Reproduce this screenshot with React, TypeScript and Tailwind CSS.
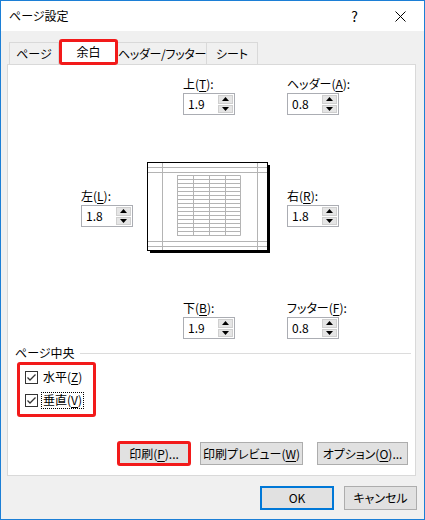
import React from 'react';

const font = "font-['Noto_Sans_CJK_JP','Noto_Sans',sans-serif] [font-feature-settings:'palt']";

const Arrow = ({ up }: { up?: boolean }) => (
  <svg width="7" height="4" viewBox="0 0 7 4">
    <path d={up ? 'M0 4 L3.5 0 L7 4 Z' : 'M0 0 L3.5 4 L7 0 Z'} fill="#000" />
  </svg>
);

const Spin = ({ value, className = '' }: { value: string; className?: string }) => (
  <div className={`flex h-[22px] w-[52px] items-center border border-[#abadb3] bg-white pl-[4px] pr-px ${className}`}>
    <span className="flex-1 text-[12px] leading-none">{value}</span>
    <div className="flex h-[18px] w-[15px] flex-col gap-px">
      <div className="flex flex-1 items-center justify-center border border-[#cfcfcf] bg-[#e5e5e5]">
        <Arrow up />
      </div>
      <div className="flex flex-1 items-center justify-center border border-[#cfcfcf] bg-[#e5e5e5]">
        <Arrow />
      </div>
    </div>
  </div>
);

const Label = ({ pre, k, className = '' }: { pre: string; k: string; className?: string }) => (
  <div className={`mb-px h-[17px] whitespace-nowrap leading-[17px] ${className}`}>
    {pre}(<span className="underline underline-offset-2">{k}</span>):
  </div>
);

const Field = ({ pre, k, value, className = '' }: { pre: string; k: string; value: string; className?: string }) => (
  <div className={`flex flex-col ${className}`}>
    <Label pre={pre} k={k} />
    <Spin value={value} />
  </div>
);

const Preview = () => {
  const rows = Array.from({ length: 16 }, (_, i) => 15 + i * 4);
  const cols = [30, 46, 62, 78, 93];
  return (
    <svg width="125" height="92" viewBox="0 0 125 92">
      <rect x="3" y="4" width="120" height="88" fill="#000" />
      <rect x="0.5" y="1.5" width="120" height="88" fill="#fff" stroke="#000" />
      <g stroke="#b4b4b4" strokeWidth="1">
        <line x1="15.5" y1="2" x2="15.5" y2="89" />
        <line x1="110.5" y1="2" x2="110.5" y2="89" />
        <line x1="1" y1="6.5" x2="120" y2="6.5" />
        <line x1="1" y1="11.5" x2="120" y2="11.5" />
        <line x1="1" y1="80.5" x2="120" y2="80.5" />
        <line x1="1" y1="85.5" x2="120" y2="85.5" />
        {rows.map((y) => (
          <line key={y} x1="30" y1={y - 0.5} x2="93.5" y2={y - 0.5} />
        ))}
        {cols.map((x) => (
          <line key={x} x1={x + 0.5} y1="14.5" x2={x + 0.5} y2="74.5" />
        ))}
      </g>
    </svg>
  );
};

const Check = () => (
  <span className="flex h-[13px] w-[13px] items-center justify-center border border-[#333] bg-white">
    <svg width="11" height="11" viewBox="0 0 11 11">
      <path d="M1.5 5.5 L4 8 L9.5 2.5" fill="none" stroke="#333" strokeWidth="1.3" />
    </svg>
  </span>
);

const Btn = ({ children, className = '' }: { children: React.ReactNode; className?: string }) => (
  <div className={`relative flex h-[23px] items-center justify-center whitespace-nowrap border border-[#adadad] bg-[#e1e1e1] text-[12px] ${className}`}>
    {children}
  </div>
);

export default function App() {
  return (
    <div className={`flex h-[520px] w-[425px] flex-col border border-[#1c7fd6] bg-[#f0f0f0] text-[12px] text-black ${font}`}>
      {/* title bar */}
      <div className="flex h-[30px] items-center bg-white pl-[8px]">
        <span className="flex-1 leading-none">ページ設定</span>
        <span className="mr-[37px] text-[14px] leading-none">?</span>
        <svg width="11" height="11" viewBox="0 0 11 11" className="mr-[18px]">
          <path d="M0.5 0.5 L10.5 10.5 M10.5 0.5 L0.5 10.5" stroke="#000" strokeWidth="1" />
        </svg>
      </div>

      {/* tabs */}
      <div className="flex h-[33px] items-end whitespace-nowrap pl-[8px] pt-[9px]">
        <div className="flex h-[22px] w-[50px] items-center justify-center border border-b-0 border-[#d9d9d9]">ページ</div>
        <div className="relative z-10 -mb-px flex h-[25px] w-[59px] items-center justify-center border border-b-0 border-[#d9d9d9] bg-white pb-[2px]">
          余白
          <div className="absolute -left-[1px] -right-[1px] -top-[2px] bottom-0 rounded-[3px] border-[3px] border-[#f21a1a]" />
        </div>
        <div className="flex h-[22px] w-[89px] items-center justify-center border border-b-0 border-l-0 border-[#d9d9d9] tracking-[-0.3px]">ヘッダー/フッター</div>
        <div className="flex h-[22px] w-[51px] items-center justify-center border border-b-0 border-l-0 border-[#d9d9d9]">シート</div>
      </div>

      {/* panel */}
      <div className="ml-[6px] mr-[8px] flex flex-1 flex-col border border-[#d9d9d9] bg-white">
        <div className="grid grid-cols-[51px_125px_52px] gap-x-[15px] pl-[73px] pt-[10px]">
          <div />
          <Field pre="上" k="T" value="1.9" className="ml-[36px]" />
          <Field pre="ヘッダー" k="A" value="0.8" />

          <Field pre="左" k="L" value="1.8" className="mt-[72px]" />
          <div className="mt-[46px]">
            <Preview />
          </div>
          <Field pre="右" k="R" value="1.8" className="mt-[72px]" />

          <div />
          <Field pre="下" k="B" value="1.9" className="ml-[36px] mt-[46px]" />
          <Field pre="フッター" k="F" value="0.8" className="mt-[46px]" />
        </div>

        <div className="ml-[7px] mr-[4px] mt-[6px] flex h-[16px] items-center gap-[5px]">
          <span className="leading-none">ページ中央</span>
          <div className="h-px flex-1 bg-[#dcdcdc]" />
        </div>

        <div className="ml-[9px] mt-px flex w-[79px] flex-col gap-[5px] rounded-[3px] border-[3px] border-[#f21a1a] pb-[5px] pl-[5px] pt-[3px]">
          <div className="flex h-[18px] items-center gap-[4px]">
            <Check />
            <span className="whitespace-nowrap px-px leading-none">
              水平(<span className="underline underline-offset-2">Z</span>)
            </span>
          </div>
          <div className="flex h-[18px] items-center gap-[3px]">
            <Check />
            <span className="flex h-[17px] items-center whitespace-nowrap border border-dotted border-black px-px leading-none">
              垂直(<span className="underline underline-offset-2">V</span>)
            </span>
          </div>
        </div>

        <div className="mt-auto mb-[10px] flex justify-end pr-[7px]">
          <Btn className="w-[72px]">
            印刷(<span className="underline underline-offset-2">P</span>)...
            <div className="absolute -inset-[2px] rounded-[3px] border-[3px] border-[#f21a1a]" />
          </Btn>
          <Btn className="ml-[10px] w-[103px]">
            印刷プレビュー(<span className="underline underline-offset-2">W</span>)
          </Btn>
          <Btn className="ml-[14px] w-[91px]">
            オプション(<span className="underline underline-offset-2">O</span>)...
          </Btn>
        </div>
      </div>

      {/* dialog buttons */}
      <div className="mb-[9px] mt-[10px] flex justify-end gap-[10px] pr-[7px]">
        <div className="flex h-[24px] w-[74px] items-center justify-center border-2 border-[#0078d7] bg-[#e1e1e1]">OK</div>
        <div className="flex h-[24px] w-[73px] items-center justify-center border border-[#adadad] bg-[#e1e1e1]">キャンセル</div>
      </div>
    </div>
  );
}
